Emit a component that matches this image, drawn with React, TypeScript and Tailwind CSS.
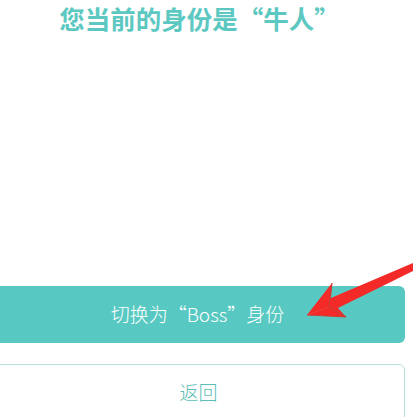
export default function App() {
  return (
    <div
      className="relative h-[417px] w-[413px] overflow-hidden bg-white"
      style={{ fontFamily: '"Noto Sans CJK SC", "Noto Sans", sans-serif' }}
    >
      <div className="-ml-[8px] flex w-[413px] flex-col">
        {/* Title */}
        <h1 className="mt-[1px] h-[33px] pl-[2px] text-center text-[25.5px] leading-[33px] font-bold text-[#5cc8c1]">
          您当前的身份是“牛人”
        </h1>

        {/* Actions */}
        <button className="mt-[252px] h-[57px] w-full rounded-[6px] bg-[#58c9c2] pr-[2px] text-center text-[19px] font-light text-white">
          切换为“Boss”身份
        </button>
        <button className="mt-[21px] h-[60px] w-full rounded-[6px] border border-[#b9dfdc] bg-white pb-[4px] text-center text-[19px] font-light text-[#5bbdb6]">
          返回
        </button>
      </div>

      {/* Annotation arrow */}
      <svg className="absolute top-0 left-0" width="413" height="417" viewBox="0 0 413 417">
        <polygon points="307,315 332,283 331,298 413,263 413,271 338,308 346,317" fill="#f42a28" />
        <polyline points="332,283 329,307 346,317" fill="none" stroke="#c9403a" strokeWidth="1.2" />
        <polyline points="307,315 346,317" fill="none" stroke="#c9403a" strokeWidth="1.2" />
        <line x1="307" y1="315" x2="329" y2="307" stroke="#e8413c" strokeWidth="1" />
      </svg>
    </div>
  );
}
